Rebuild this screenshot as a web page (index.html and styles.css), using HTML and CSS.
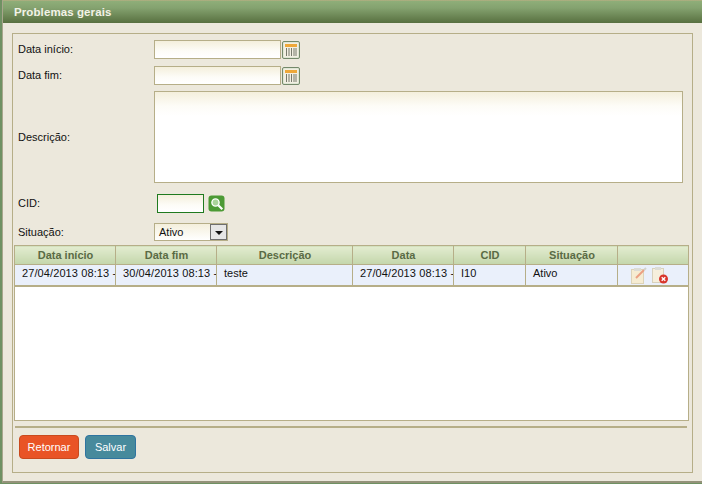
FILE: index.html
```html
<!DOCTYPE html>
<html lang="en">
<head>
    <meta charset="UTF-8">
    <title>Problemas gerais</title>
    <link rel="stylesheet" href="styles.css">
</head>
<body>

<div class="janela">
    <div class="titulo">Problemas gerais</div>

    <div class="conteudo">
        <div class="quadro">

            <div class="linha linha-data">
                <label>Data início:</label>
                <input type="text" class="campo data">
                <svg class="icone-cal" width="18" height="18" viewBox="0 0 18 18">
                    <rect x="0.5" y="0.5" width="17" height="17" rx="1.5" fill="#dfe6d4" stroke="#74896a"/>
                    <rect x="2" y="2" width="14" height="14" fill="#f2efe2"/>
                    <rect x="3" y="3" width="12" height="3" fill="#eda83a"/>
                    <path d="M4.5 7v8M7 7v8M9.5 7v8M12 7v8M14 7v8" stroke="#777a6c"/>
                </svg>
            </div>
            <div class="linha linha-data">
                <label>Data fim:</label>
                <input type="text" class="campo data">
                <svg class="icone-cal" width="18" height="18" viewBox="0 0 18 18">
                    <rect x="0.5" y="0.5" width="17" height="17" rx="1.5" fill="#dfe6d4" stroke="#74896a"/>
                    <rect x="2" y="2" width="14" height="14" fill="#f2efe2"/>
                    <rect x="3" y="3" width="12" height="3" fill="#eda83a"/>
                    <path d="M4.5 7v8M7 7v8M9.5 7v8M12 7v8M14 7v8" stroke="#777a6c"/>
                </svg>
            </div>
            <div class="linha linha-desc">
                <label>Descrição:</label>
                <textarea class="campo desc"></textarea>
            </div>
            <div class="linha linha-cid">
                <label>CID:</label>
                <input type="text" class="campo cid">
                <svg class="icone-busca" width="17" height="17" viewBox="0 0 17 17">
                    <rect width="16" height="16" x="0.5" y="0.5" rx="3" fill="#4c9a35"/>
                    <circle cx="7.5" cy="7.5" r="3.6" fill="#a9d39a" stroke="#fff" stroke-width="1.4"/>
                    <path d="M10.3 10.3l4 4" stroke="#fff" stroke-width="2.2"/>
                </svg>
            </div>
            <div class="linha linha-sit">
                <label>Situação:</label>
                <div class="combo">
                    <span class="combo-texto">Ativo</span>
                    <span class="combo-seta"></span>
                </div>
            </div>

            <div class="grade">
                <table>
                    <colgroup>
                        <col class="c1"><col class="c2"><col class="c3"><col class="c4"><col class="c5"><col class="c6"><col class="c7">
                    </colgroup>
                    <thead>
                        <tr>
                            <th>Data início</th>
                            <th>Data fim</th>
                            <th>Descrição</th>
                            <th>Data</th>
                            <th>CID</th>
                            <th>Situação</th>
                            <th></th>
                        </tr>
                    </thead>
                    <tbody>
                        <tr>
                            <td><div class="corte">27/04/2013 08:13 -03:00</div></td>
                            <td><div class="corte">30/04/2013 08:13 -03:00</div></td>
                            <td>teste</td>
                            <td><div class="corte">27/04/2013 08:13 -03:00</div></td>
                            <td class="td-cid">I10</td>
                            <td>Ativo</td>
                            <td class="acoes">
                                <svg width="16" height="17" viewBox="0 0 16 17">
                                    <rect x="0.5" y="2.5" width="12" height="14" fill="#f6ecd2" stroke="#ddd3b8"/>
                                    <rect x="3" y="1" width="7" height="3" fill="#dcdcd6"/>
                                    <path d="M5 11l8-8" stroke="#eba083" stroke-width="2"/>
                                    <path d="M13 3l2-2" stroke="#d2d2cc" stroke-width="2"/>
                                </svg>
                                <svg width="17" height="17" viewBox="0 0 17 17">
                                    <rect x="0.5" y="1.5" width="11" height="14" fill="#f6efdc" stroke="#d8d1bc"/>
                                    <rect x="3" y="0" width="6" height="3" fill="#dcdcd6"/>
                                    <circle cx="11.5" cy="12" r="4.5" fill="#d9362c"/>
                                    <path d="M9.7 10.2l3.6 3.6M13.3 10.2l-3.6 3.6" stroke="#fff" stroke-width="1.4"/>
                                </svg>
                            </td>
                        </tr>
                    </tbody>
                </table>
            </div>

            <div class="rodape">
                <button class="botao retornar">Retornar</button>
                <button class="botao salvar">Salvar</button>
            </div>
        </div>
    </div>
</div>

</body>
</html>
```

FILE: styles.css
```css
*{
    margin: 0px;
    padding: 0px;
    box-sizing: border-box;
}
html,body{
    height: 100%;
    overflow: hidden;
}
body{
    background: #6f9163;
    font: 11px "Liberation Sans", Arial, sans-serif;
    color: #111;
}
.janela{
    height: 483px;
    margin-left: 2px;
    background: #ece8dc;
    border-left: 1px solid #a8a68c;
    border-bottom: 2px solid #94927a;
    display: flex;
    flex-direction: column;
}
.titulo{
    height: 23px;
    flex-shrink: 0;
    padding: 6px 0 0 11px;
    font-weight: bold;
    font-size: 11.5px;
    letter-spacing: 0.1px;
    color: #f2f2e6;
    background: linear-gradient(#c4ad84 0px, #8fae79 1px, #84a26f 8px, #587040 23px);
}
.conteudo{
    padding: 10px 9px 0 9px;
}
.quadro{
    height: 440px;
    border: 1px solid #b6ae88;
    padding: 6px 3px 0 1px;
    position: relative;
}
.linha{
    display: flex;
    align-items: center;
    padding-left: 4px;
}
.linha label{
    width: 136px;
    flex-shrink: 0;
}
.linha-data{
    height: 19px;
    margin-bottom: 7px;
}
.linha-data label,.linha-cid label{
    padding-bottom: 2px;
}
.campo{
    border: 1px solid #b6ae88;
    background: linear-gradient(#f4efdc 0px, #fdfcf7 10px, #ffffff 16px);
    display: block;
}
.data{
    width: 127px;
    height: 19px;
}
.icone-cal{
    margin-left: 1px;
}
.desc{
    width: 529px;
    height: 92px;
    resize: none;
    background: linear-gradient(#f4efdc 0px, #fdfcf7 14px, #ffffff 24px);
}
.linha-desc{
    margin-top: -1px;
    height: 92px;
}
.linha-cid{
    margin-top: 11px;
    height: 19px;
}
.cid{
    width: 47px;
    height: 19px;
    margin-left: 3px;
    border-color: #1f7a1f;
}
.icone-busca{
    margin-left: 4px;
}
.linha-sit{
    margin-top: 10px;
    height: 18px;
}
.combo{
    width: 74px;
    height: 18px;
    border: 1px solid #b6ae88;
    background: linear-gradient(#f4efdc, #ffffff);
    display: flex;
    align-items: center;
    justify-content: space-between;
}
.combo-texto{
    padding-left: 4px;
}
.combo-seta{
    width: 17px;
    height: 16px;
    background: #e6e6e6;
    border: 1px solid #6e6e6e;
    position: relative;
}
.combo-seta:after{
    content: "";
    position: absolute;
    left: 4px;
    top: 6px;
    border-left: 4px solid transparent;
    border-right: 4px solid transparent;
    border-top: 4px solid #111;
}
.grade{
    margin-top: 4px;
    width: 675px;
    height: 176px;
    background: #fff;
    border: 1px solid #b6ae88;
    border-top: 0;
}
table{
    border-collapse: collapse;
    table-layout: fixed;
    width: 675px;
    margin-left: -1px;
}
.c1,.c2,.c4{
    width: 101px;
}
.c3{
    width: 136px;
}
.c5{
    width: 72px;
}
.c6{
    width: 92px;
}
th{
    height: 19px;
    border: 1px solid #b6ae88;
    background: linear-gradient(#e3ecd0, #c3d6ab);
    color: #5a6b45;
    font-size: 11px;
    padding-left: 1px;
}
td{
    height: 21px;
    background: #eaf0fb;
    border-left: 1px solid #b6ae88;
    border-right: 1px solid #b6ae88;
    border-bottom: 2px solid #b6ae88;
    padding-left: 7px;
    padding-bottom: 4px;
    white-space: nowrap;
    overflow: hidden;
}
.td-cid{
    padding-left: 7px;
}
.corte{
    width: 93px;
    overflow: hidden;
    letter-spacing: 0.1px;
}
.acoes{
    padding: 1px 0 0 13px;
}
.acoes svg{
    vertical-align: middle;
    margin-right: 2px;
}
.rodape{
    margin: 5px 0 0 1px;
    padding-top: 7px;
    border-top: 2px solid #b6ae88;
    width: 672px;
    display: flex;
    gap: 6px;
    padding-left: 4px;
}
.botao{
    height: 24px;
    border-radius: 4px;
    color: #fff;
    font: 11px "Liberation Sans", Arial, sans-serif;
}
.retornar{
    width: 60px;
    background: #e95426;
    border: 1px solid #c94a1e;
}
.salvar{
    width: 51px;
    background: #478a9c;
    border: 1px solid #2f74a0;
}
```
